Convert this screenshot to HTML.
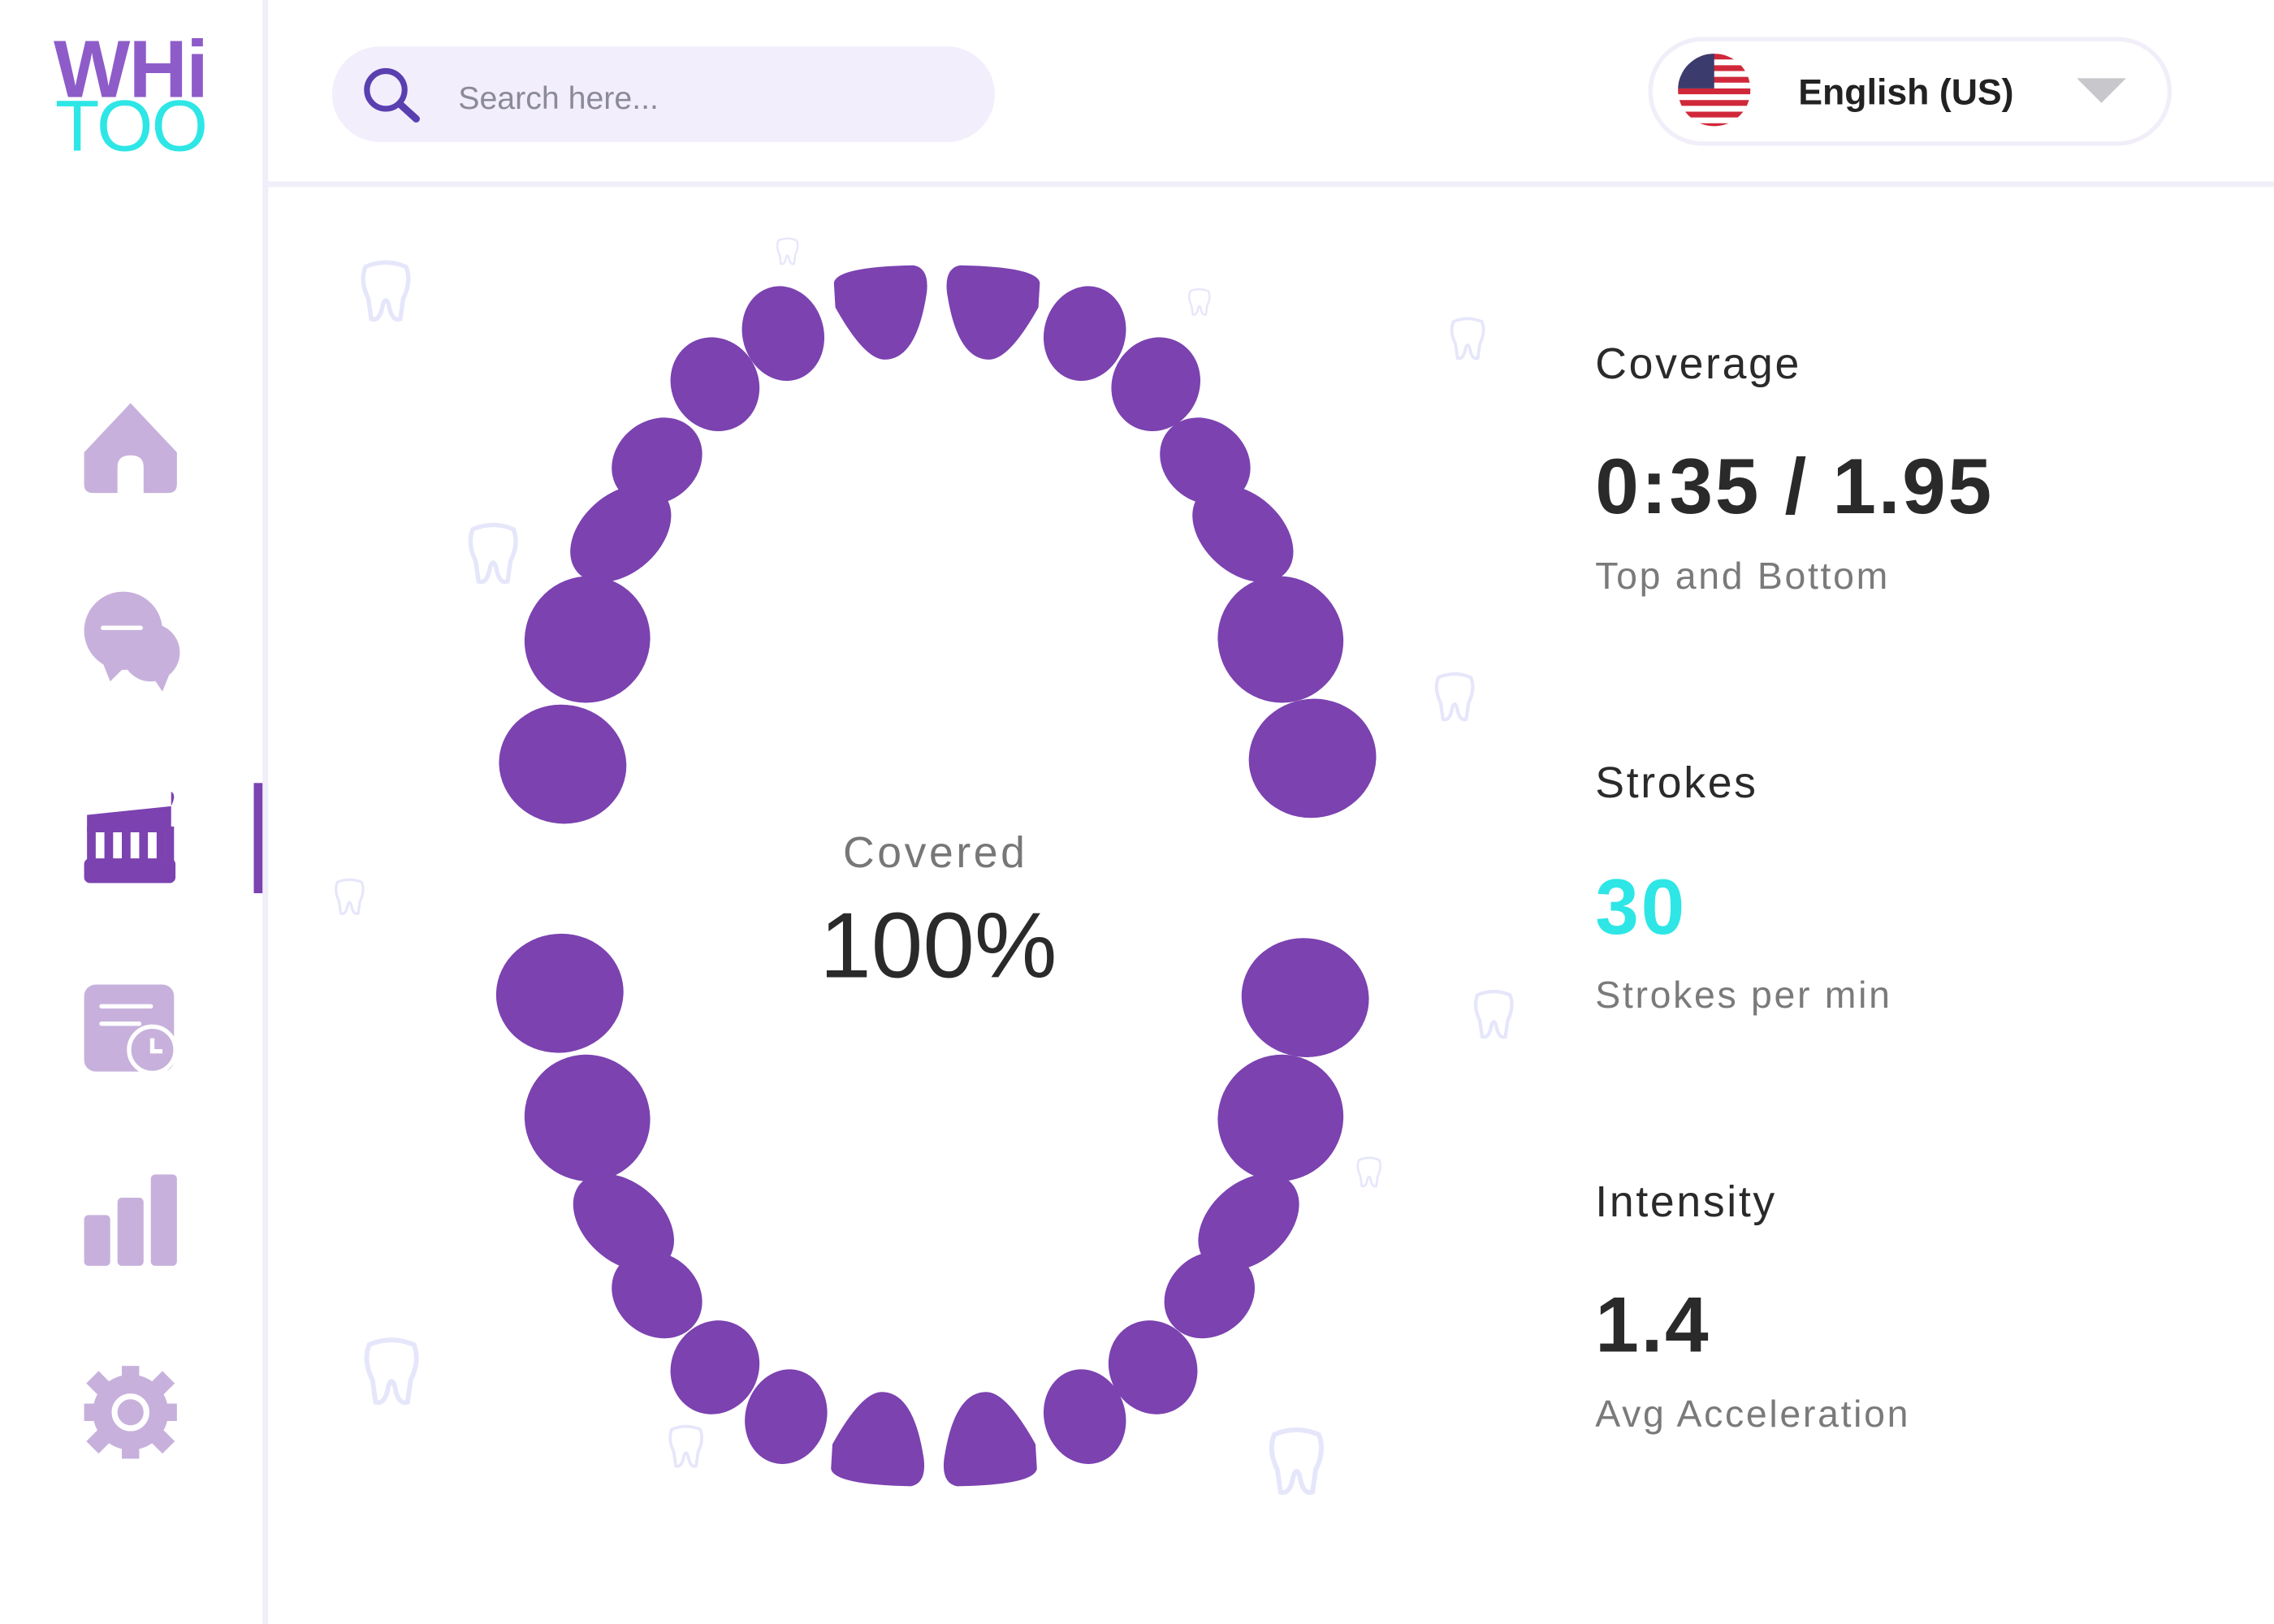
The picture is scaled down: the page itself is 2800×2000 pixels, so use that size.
<!DOCTYPE html>
<html><head><meta charset="utf-8"><style>
html,body{margin:0;padding:0;background:#fff;width:2800px;height:2000px;overflow:hidden}
#w{position:absolute;left:0;top:0;width:1568px;height:1120px;transform:scale(1.785714);transform-origin:0 0;font-family:"Liberation Sans",sans-serif}
.t{position:absolute;left:1100px;color:#2a2a2a;letter-spacing:1.5px}
</style></head><body><div id="w">
<svg width="1568" height="1120" viewBox="0 0 1568 1120" style="position:absolute;left:0;top:0">
<defs>
<path id="bt" d="M-14,-16 Q0,-22 14,-16 Q18,-6 12,6 L10,20 Q4,22 2,10 Q0,4 -2,10 Q-4,22 -10,20 L-12,6 Q-18,-6 -14,-16Z"/>
<path id="inc" d="M575,195 Q577,184 630,183 Q641,185 639,202 Q632,248 610,248 Q596,248 576,212Z"/>
</defs>
<rect x="181" y="0" width="4" height="1120" fill="#f1eefa"/>
<rect x="185" y="125" width="1383" height="4" fill="#f1eefa"/>
<rect x="175" y="540" width="6" height="76" fill="#7b42b0"/>
<text x="37" y="67" font-family="Liberation Sans" font-weight="bold" font-size="56" fill="#8e5cc9" letter-spacing="-1">WHi</text>
<text x="38" y="104" font-family="Liberation Sans" font-size="50" fill="#2ee6e6" letter-spacing="-1">TOO</text>
<rect x="229" y="32" width="457" height="66" rx="33" fill="#f3eefb"/>
<circle cx="266" cy="62" r="13" fill="none" stroke="#5a3fb0" stroke-width="4"/>
<line x1="276" y1="72" x2="287" y2="82" stroke="#5a3fb0" stroke-width="5" stroke-linecap="round"/>
<text x="316" y="75" font-size="22" fill="#8a8a9a">Search here...</text>
<rect x="1138" y="27" width="358" height="72" rx="36" fill="#fff" stroke="#f1eef9" stroke-width="3"/>
<clipPath id="fc"><circle cx="1182" cy="62" r="25"/></clipPath>
<g clip-path="url(#fc)">
<rect x="1157" y="37" width="50" height="50" fill="#fff"/>
<g fill="#d0283a"><rect x="1157" y="37" width="50" height="4"/><rect x="1157" y="45" width="50" height="4"/><rect x="1157" y="53" width="50" height="4"/><rect x="1157" y="61" width="50" height="4"/><rect x="1157" y="69" width="50" height="4"/><rect x="1157" y="77" width="50" height="4"/><rect x="1157" y="85" width="50" height="4"/></g>
<rect x="1157" y="37" width="25" height="24" fill="#3c3b6e"/>
</g>
<text x="1240" y="72" font-size="25" font-weight="bold" fill="#222">English (US)</text>
<polygon points="1432,54 1466,54 1449,71" fill="#c8c8cc"/>
<g fill="#c7b1dc">
<path d="M58,312 L90,278 L122,312 L122,334 Q122,340 116,340 L99,340 L99,322 Q99,314 90,314 Q81,314 81,322 L81,340 L64,340 Q58,340 58,334Z"/>
<circle cx="85" cy="435" r="27"/><path d="M70,455 L76,470 L88,458Z"/>
<circle cx="104" cy="450" r="20"/><path d="M104,465 L112,477 L118,462Z"/>
<rect x="58" y="679" width="62" height="60" rx="8"/>
<rect x="58" y="838" width="18" height="35" rx="3"/><rect x="81" y="826" width="18" height="47" rx="3"/><rect x="104" y="810" width="18" height="63" rx="3"/>
<circle cx="90" cy="974" r="26"/>
</g>
<line x1="71" y1="433" x2="97" y2="433" stroke="#fff" stroke-width="3" stroke-linecap="round"/>
<g stroke="#fff" stroke-width="3" stroke-linecap="round"><line x1="70" y1="694" x2="104" y2="694"/><line x1="70" y1="706" x2="96" y2="706"/></g>
<circle cx="105" cy="724" r="16" fill="#c7b1dc" stroke="#fff" stroke-width="3"/>
<path d="M105,716 V725 H112" stroke="#fff" stroke-width="3" fill="none"/>
<g fill="#c7b1dc"><rect x="84" y="942" width="12" height="10"/><rect x="84" y="996" width="12" height="10"/><rect x="58" y="968" width="10" height="12"/><rect x="112" y="968" width="10" height="12"/><rect x="62" y="948" width="12" height="12" transform="rotate(45 68 954)"/><rect x="106" y="948" width="12" height="12" transform="rotate(45 112 954)"/><rect x="62" y="988" width="12" height="12" transform="rotate(45 68 994)"/><rect x="106" y="988" width="12" height="12" transform="rotate(45 112 994)"/></g>
<circle cx="90" cy="974" r="11" fill="none" stroke="#fff" stroke-width="4"/>
<path d="M60,562 L118,556 Q122,548 118,546 L118,574 L60,574Z" fill="#7b42b0"/>
<rect x="58" y="592" width="63" height="17" rx="4" fill="#7b42b0"/>
<g fill="#7b42b0"><rect x="60" y="570" width="6" height="24"/><rect x="72" y="570" width="6" height="24"/><rect x="84" y="570" width="6" height="24"/><rect x="96" y="570" width="6" height="24"/><rect x="108" y="570" width="6" height="24"/><rect x="114" y="570" width="6" height="24"/></g>
<g fill="none" stroke="#e6e6fb" stroke-width="3">
<use href="#bt" transform="translate(266,200)"/><use href="#bt" transform="translate(340,381)"/><use href="#bt" transform="translate(1012,233) scale(.7)"/>
<use href="#bt" transform="translate(1003,480) scale(.8)"/><use href="#bt" transform="translate(1030,699) scale(.8)"/><use href="#bt" transform="translate(270,945) scale(1.1)"/>
<use href="#bt" transform="translate(894,1007) scale(1.1)"/><use href="#bt" transform="translate(473,997) scale(.7)"/><use href="#bt" transform="translate(241,618) scale(.6)"/>
<use href="#bt" transform="translate(944,808) scale(.5)"/><use href="#bt" transform="translate(827,208) scale(.45)"/><use href="#bt" transform="translate(543,173) scale(.45)"/>
</g>
<g fill="#7b42b0">
<use href="#inc"/>
<use href="#inc" transform="translate(1292,0) scale(-1,1)"/>
<use href="#inc" transform="translate(-2,1208) scale(1,-1)"/>
<use href="#inc" transform="translate(1290,1208) scale(-1,-1)"/>
<ellipse transform="translate(540,230) rotate(-16)" rx="28" ry="33"/>
<ellipse transform="translate(748,230) rotate(16)" rx="28" ry="33"/>
<ellipse transform="translate(493,265) rotate(-28)" rx="30" ry="33"/>
<ellipse transform="translate(797,265) rotate(28)" rx="30" ry="33"/>
<ellipse transform="translate(453,318) rotate(-38)" rx="33" ry="28"/>
<ellipse transform="translate(831,318) rotate(38)" rx="33" ry="28"/>
<ellipse transform="translate(428,368) rotate(-42)" rx="40" ry="27"/>
<ellipse transform="translate(857,368) rotate(42)" rx="40" ry="27"/>
<ellipse transform="translate(405,441) rotate(-55)" rx="44" ry="43"/>
<ellipse transform="translate(883,441) rotate(55)" rx="44" ry="43"/>
<ellipse transform="translate(388,527) rotate(-80)" rx="41" ry="44"/>
<ellipse transform="translate(905,523) rotate(80)" rx="41" ry="44"/>
<ellipse transform="translate(386,685) rotate(80)" rx="41" ry="44"/>
<ellipse transform="translate(900,688) rotate(-80)" rx="41" ry="44"/>
<ellipse transform="translate(405,771) rotate(55)" rx="44" ry="43"/>
<ellipse transform="translate(883,771) rotate(-55)" rx="44" ry="43"/>
<ellipse transform="translate(430,843) rotate(42)" rx="40" ry="27"/>
<ellipse transform="translate(861,843) rotate(-42)" rx="40" ry="27"/>
<ellipse transform="translate(453,893) rotate(38)" rx="33" ry="28"/>
<ellipse transform="translate(834,893) rotate(-38)" rx="33" ry="28"/>
<ellipse transform="translate(493,943) rotate(28)" rx="30" ry="33"/>
<ellipse transform="translate(795,943) rotate(-28)" rx="30" ry="33"/>
<ellipse transform="translate(542,977) rotate(16)" rx="28" ry="33"/>
<ellipse transform="translate(748,977) rotate(-16)" rx="28" ry="33"/>
</g>
<text x="645" y="598" text-anchor="middle" font-size="30" fill="#777" letter-spacing="2">Covered</text>
<text x="647" y="674" text-anchor="middle" font-size="64" fill="#2a2a2a">100%</text>
</svg>
<div class="t" style="top:235px;font-size:30px">Coverage</div>
<div class="t" style="top:305px;font-size:54px;font-weight:bold">0:35 / 1.95</div>
<div class="t" style="top:382px;font-size:26px;color:#7a7a7a">Top and Bottom</div>
<div class="t" style="top:524px;font-size:30px">Strokes</div>
<div class="t" style="top:595px;font-size:54px;font-weight:bold;color:#2ee6e6">30</div>
<div class="t" style="top:671px;font-size:26px;color:#7a7a7a">Strokes per min</div>
<div class="t" style="top:813px;font-size:30px">Intensity</div>
<div class="t" style="top:883px;font-size:54px;font-weight:bold">1.4</div>
<div class="t" style="top:960px;font-size:26px;color:#7a7a7a">Avg Acceleration</div>
</div></body></html>
